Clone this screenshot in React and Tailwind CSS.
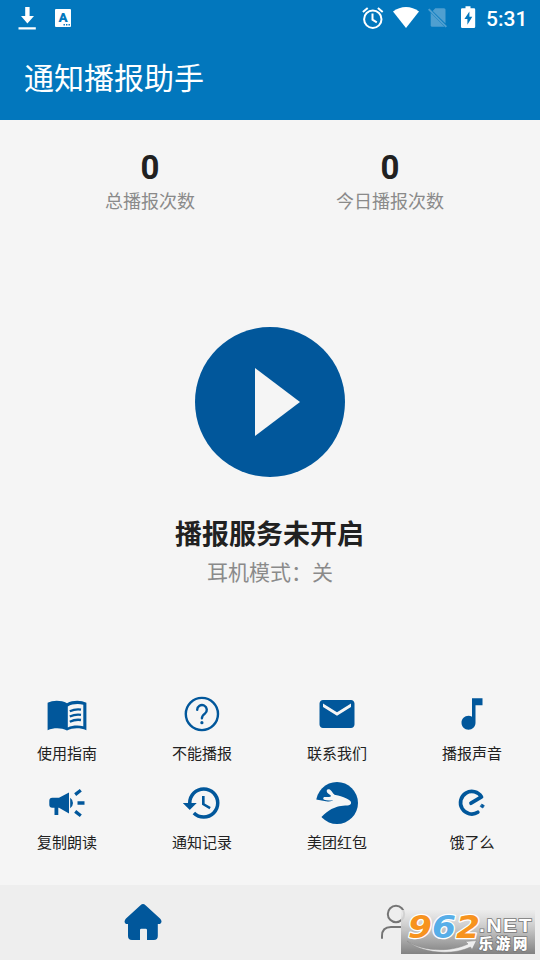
import React from 'react';
import { MdEmail, MdMusicNote, MdHistory } from 'react-icons/md';

function GuideIcon() {
  return (
    <svg width="42" height="42" viewBox="0 0 42 42">
      <path fill="currentColor" d="M1.600 9.800C7 7 15 7 21 10.200 27 7 35 7 40.400 9.800V37.200C34 34.600 27 34.600 21 37.400 15 34.600 8 34.600 1.600 37.200z" />
      <path fill="#f5f5f5" d="M21.800 13.400C26 11 32 10.600 37.300 11.700V33.200C32 32 26 32.400 21.800 34.400z" />
      <path fill="none" stroke="currentColor" strokeWidth="2.300" d="M23.800 18.300q5.500-2.600 11.200-1.700M23.800 23.500q5.500-2.600 11.200-1.700M23.800 28.700q5.500-2.600 11.200-1.700" />
    </svg>
  );
}

function HelpIcon() {
  return (
    <svg width="42" height="42" viewBox="0 0 42 42" fill="none" stroke="currentColor" strokeWidth="2.4" strokeLinecap="round">
      <circle cx="20.9" cy="21" r="16.1" />
      <path d="M16.200 16.800a4.800 4.800 0 1 1 7.700 3.800c-1.900 1.400-3 2.300-3 4.700" />
      <circle cx="20.9" cy="29.7" r="1.6" fill="currentColor" stroke="none" />
    </svg>
  );
}

function HornIcon() {
  return (
    <svg width="42" height="42" viewBox="0 0 42 42" fill="currentColor">
      <path d="M6.300 15.700H13l10-5.200v21l-10-5.800h-.7V33H8.500v-7.300H6.300q-3 0-3-3v-4q0-3 3-3z" />
      <path d="M24.200 15.800q2.800 2.200 2.800 5.200t-2.800 5.200z" />
      <path fill="none" stroke="currentColor" strokeWidth="3.300" d="M31.500 21h7M29.200 12.600l5.600-4.300M29.200 29.400l5.600 4.300" />
    </svg>
  );
}

function MeituanIcon() {
  return (
    <svg width="42" height="42" viewBox="0 0 42 42">
      <circle cx="21" cy="21" r="21" fill="currentColor" />
      <path
        fill="#f5f5f5"
        d="M-1 17.400l11 1.800c3 .5 6.300.2 7-.9-2.800.3-6.400.5-8.800-.5-1.600-.9-1.100-2.700.6-2.700 2 0 4.500.3 6.400-1.200-1.600-1.600-4.200-2.200-4.500-4.600-.2-1.900 1.700-2.700 3.400-1.600 2.600 1.600 2.600 4.400 5.400 5.400 3.200.7 7.200 1.400 11 3.400 2.600 1.300 4.600 2.600 4.600 4.200 0 1.900-1.800 2.600-3.600 2.700-6.400.3-10.700.7-16 3.700-3.700 2.100-6.700 4.600-9.800 7.600L-2 38z"
      />
    </svg>
  );
}

function ElemeIcon() {
  return (
    <svg width="42" height="42" viewBox="0 0 42 42" fill="none" stroke="currentColor" strokeWidth="3.7" strokeLinecap="round" strokeLinejoin="round">
      <path d="M20 21.200L30.500 14.900A11.300 11.300 0 1 0 26.800 30.300" />
      <path d="M31 22.300l2.300 1.300-1.500 2.400-2.300-1.400z" fill="currentColor" strokeWidth=".8" />
    </svg>
  );
}

const shortcuts = [
  { label: '使用指南', icon: GuideIcon },
  { label: '不能播报', icon: HelpIcon },
  { label: '联系我们', icon: MdEmail },
  { label: '播报声音', icon: MdMusicNote },
  { label: '复制朗读', icon: HornIcon },
  { label: '通知记录', icon: MdHistory },
  { label: '美团红包', icon: MeituanIcon },
  { label: '饿了么', icon: ElemeIcon },
];

function StatusBar() {
  return (
    <div className="h-9 flex items-center justify-between pl-[18px] pr-[14px]">
      <div className="flex items-center gap-[18px]">
        <svg width="19" height="36" viewBox="0 0 19 36" fill="#fff">
          <path d="M7.200 7h4.400v9H16l-6.600 7.500L3 16h4.200zM.5 27.200h17.300v2.300H.5z" />
        </svg>
        <svg width="16" height="36" viewBox="0 0 16 36">
          <rect y="9" width="16" height="18" rx="1" fill="#fff" />
          <text x="8" y="22.300" fontSize="13.500" fontWeight="900" textAnchor="middle" fill="#0277bd">A</text>
          <path d="M8.500 24h1.400v1.400H8.500zM11 24h1.400v1.400H11zM13.500 24h1.400v1.400h-1.400z" fill="#0277bd" />
        </svg>
      </div>
      <div className="flex items-center">
        <svg width="22" height="36" viewBox="0 0 22 36" fill="none" stroke="#fff" strokeWidth="2">
          <circle cx="10.800" cy="19.200" r="8.700" />
          <path d="M10.500 13.500v6.200l4.300 2.600M.9 11.900l4.800-4M20.700 11.900l-4.800-4" />
        </svg>
        <svg className="ml-[9px]" width="26" height="36" viewBox="0 0 26 36" fill="#fff">
          <path d="M0 11.500C7.500 5.500 18.500 5.500 26 11.500L13 28z" />
        </svg>
        <svg className="ml-[9px]" width="20" height="36" viewBox="0 0 20 36">
          <g fill="#4f9fd0">
            <path d="M7.300 8.300H16q1.500 0 1.500 1.500v13.600L4.700 10.900z" />
            <path d="M2.700 12.700l13.800 14H4.200q-1.500 0-1.500-1.500z" />
            <path d="M1.400 8.400L0 9.800l17.600 17.800 1.400-1.400z" />
          </g>
        </svg>
        <svg className="ml-[13px]" width="15" height="36" viewBox="0 0 15 36">
          <path d="M4.500 6.200h5v2H13q1.200 0 1.200 1.200v17.400q0 1.200-1.200 1.200H1.200Q0 28 0 26.800V9.400q0-1.200 1.200-1.200h3.300z" fill="#fff" />
          <path d="M8.400 11.400l-5 7.700h3v5.600l4.900-7.900H8.400z" fill="#0277bd" />
        </svg>
        <span className="ml-[10px] w-10 text-[21px] leading-9 font-medium text-white pt-[2px] whitespace-nowrap">5:31</span>
      </div>
    </div>
  );
}

function Stat({ value, label }) {
  return (
    <div className="flex flex-col items-center">
      <span className="text-[33px] leading-[38px] font-bold text-[#212121]">{value}</span>
      <span className="mt-px text-[18px] leading-[28px] text-[#8a8a8a]">{label}</span>
    </div>
  );
}

function Watermark() {
  return (
    <svg className="absolute left-[401px] top-[25px]" width="134" height="44" viewBox="0 0 134 44">
      <defs>
        <linearGradient id="plate" x1="0" y1="0" x2="0" y2="1">
          <stop offset="0" stopColor="#ececec" stopOpacity=".8" />
          <stop offset=".45" stopColor="#c4c4c4" />
          <stop offset="1" stopColor="#828282" />
        </linearGradient>
      </defs>
      <rect width="134" height="44" fill="url(#plate)" />
      <path d="M6 31c14 10 42 12 61 3l-2.500-2.500 11-1-4.500 9-1.500-2.500C51 46 20 43 6 31z" fill="#eee" stroke="#888" strokeWidth=".5" />
      {/* Wide italic digits with a white rim */}
      <g fontFamily="DejaVu Sans" fontSize="32" fontWeight="bold" fontStyle="italic" stroke="#fff" strokeWidth="2.500" paintOrder="stroke" strokeLinejoin="round">
        <text x="7" y="28.300" textLength="24" lengthAdjust="spacingAndGlyphs" fill="#f7931e">9</text>
        <text x="31" y="28.300" textLength="24" lengthAdjust="spacingAndGlyphs" fill="#57aee8">6</text>
        <text x="55" y="28.300" textLength="24" lengthAdjust="spacingAndGlyphs" fill="#f7931e">2</text>
      </g>
      <g fill="#fff" stroke="#777" strokeWidth="1.500" paintOrder="stroke" fontWeight="900">
        <text x="78" y="21.500" fontSize="19" letterSpacing="1.500" fontFamily="Liberation Sans" textLength="54" lengthAdjust="spacingAndGlyphs">.NET</text>
        <text x="77.500" y="38.700" fontSize="14.500" letterSpacing="2.800" fontFamily="Noto Sans CJK SC">乐游网</text>
      </g>
    </svg>
  );
}

export default function App() {
  return (
    <div className="w-[540px] h-[960px] flex flex-col bg-[#f5f5f5] overflow-hidden font-[Roboto,'Noto_Sans_CJK_SC',sans-serif]">
      <header className="h-[120px] shrink-0 bg-[#0277bd]">
        <StatusBar />
        <h1 className="h-[84px] px-6 text-[30px] leading-[86px] text-white">通知播报助手</h1>
      </header>

      <main className="flex-1 flex flex-col">
        <div className="grid grid-cols-2 px-[30px] pt-[29px]">
          <Stat value="0" label="总播报次数" />
          <Stat value="0" label="今日播报次数" />
        </div>

        {/* Service toggle */}
        <div className="flex flex-col items-center mt-[111px]">
          <button className="w-[150px] h-[150px] rounded-full bg-[#01579b]">
            <svg width="150" height="150" viewBox="0 0 150 150" fill="#f5f5f5">
              <path d="M60 41v68l45-34z" />
            </svg>
          </button>
          <p className="mt-[38px] -ml-px text-[27px] leading-[40px] font-bold text-[#212121]">播报服务未开启</p>
          <p className="mt-[3px] text-[21px] leading-[30px] text-[#8a8a8a]">耳机模式：关</p>
        </div>

        <div className="mt-[105px] -ml-[0.5px] w-[540px] grid grid-cols-4">
          {shortcuts.map((item) => {
            const Icon = item.icon;
            return (
              <div key={item.label} className="h-[89px] flex flex-col items-center text-[#01579b]">
                <Icon size={42} />
                <span className="mt-[7px] text-[15px] leading-[24px] text-[#212121]">{item.label}</span>
              </div>
            );
          })}
        </div>
      </main>

      {/* Bottom navigation */}
      <nav className="relative h-[75px] shrink-0 bg-[#eeeeee] flex justify-between pl-[122px] pr-[122px]">
        <svg width="42" height="75" viewBox="0 0 42 75" fill="#01579b">
          <path d="M18.500 20.200q2.500-2.200 5 0L38 33.400q2.400 2.600 1 4.500-.7 1.300-3.200 1.200V51q0 4-4 4H25V45q0-1.300-1.300-1.300h-4.400Q18 43.700 18 45v10h-8q-4 0-4-4V39.100q-2.300.1-3-1.200-1.200-1.900 1-4.500z" />
        </svg>
        <svg width="42" height="75" viewBox="0 0 42 75" fill="none" stroke="#757575" strokeWidth="2" strokeLinecap="round">
          <circle cx="20" cy="29" r="8.200" />
          <path d="M6 53v-2q0-9 9-9h10q9 0 9 9v2" />
        </svg>
        <Watermark />
      </nav>
    </div>
  );
}
